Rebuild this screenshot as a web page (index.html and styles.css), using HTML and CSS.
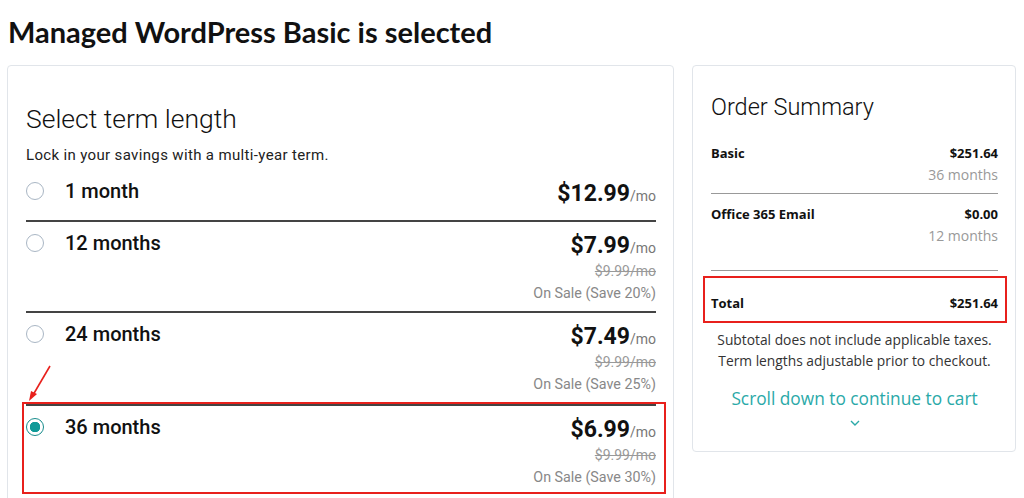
FILE: index.html
```html
<!DOCTYPE html>
<html>

<head>
    <title>Managed WordPress Basic</title>
    <link rel="stylesheet" href="styles.css">
</head>

<body>
    <h1 class="pageTitle">Managed WordPress Basic is selected</h1>

    <div class="layout">
        <div class="card termCard">
            <h2 class="cardTitle">Select term length</h2>
            <p class="termHint">Lock in your savings with a multi-year term.</p>

            <div class="term termSingle">
                <div class="termLabel"><span class="radio"></span>1 month</div>
                <div class="termPrice">
                    <div class="priceNow">$12.99<span class="perMonth">/mo</span></div>
                </div>
            </div>

            <div class="term">
                <div class="termLabel"><span class="radio"></span>12 months</div>
                <div class="termPrice">
                    <div class="priceNow">$7.99<span class="perMonth">/mo</span></div>
                    <div class="priceOld">$9.99/mo</div>
                    <div class="priceSale">On Sale (Save 20%)</div>
                </div>
            </div>

            <div class="term">
                <div class="termLabel"><span class="radio"></span>24 months</div>
                <div class="termPrice">
                    <div class="priceNow">$7.49<span class="perMonth">/mo</span></div>
                    <div class="priceOld">$9.99/mo</div>
                    <div class="priceSale">On Sale (Save 25%)</div>
                </div>
            </div>

            <div class="highlight termHighlight">
                <!-- seta vermelha apontando para a opção escolhida -->
                <svg class="arrow" width="30" height="40" viewBox="0 0 30 40">
                    <line x1="26" y1="2" x2="9" y2="31" stroke="#e8201c" stroke-width="1.6" />
                    <polygon points="5,37 7,27 13,30" fill="#e8201c" />
                </svg>
                <div class="term">
                    <div class="termLabel"><span class="radio checked"></span>36 months</div>
                    <div class="termPrice">
                        <div class="priceNow">$6.99<span class="perMonth">/mo</span></div>
                        <div class="priceOld">$9.99/mo</div>
                        <div class="priceSale">On Sale (Save 30%)</div>
                    </div>
                </div>
            </div>
        </div>

        <div class="card summaryCard">
            <h2 class="cardTitle summaryTitle">Order Summary</h2>

            <div class="summaryRow">
                <div class="summaryLine">
                    <span>Basic</span>
                    <span>$251.64</span>
                </div>
                <div class="summaryTerm">36 months</div>
            </div>

            <div class="summaryRow summaryRowLast">
                <div class="summaryLine">
                    <span>Office 365 Email</span>
                    <span>$0.00</span>
                </div>
                <div class="summaryTerm">12 months</div>
            </div>

            <div class="highlight totalHighlight">
                <div class="summaryLine">
                    <span>Total</span>
                    <span>$251.64</span>
                </div>
            </div>

            <p class="summaryNote">Subtotal does not include applicable taxes.<br>Term lengths adjustable prior to checkout.</p>

            <a class="scrollLink" href="#">Scroll down to continue to cart</a>
            <div class="chevron">
                <svg width="12" height="8" viewBox="0 0 12 8">
                    <polyline points="2,2 6,6 10,2" fill="none" stroke="#2aa9a8" stroke-width="1.4" />
                </svg>
            </div>
        </div>
    </div>
</body>

</html>
```

FILE: styles.css
```css
body {
    margin: 0;
    padding: 0;
    background-color: #fff;
    color: #111;
    font-family: Roboto, Arial, sans-serif;
    overflow: hidden;
}

.pageTitle {
    font-family: Lato, Arial, sans-serif;
    font-size: 29px;
    font-weight: 700;
    line-height: 34px;
    margin: 15px 0 0 8px;
    color: #111;
}

.layout {
    display: flex;
    align-items: flex-start;
    gap: 18px;
    margin: 16px 0 0 7px;
}

.card {
    border: 1px solid #e1e5ea;
    border-radius: 4px;
    background-color: #fff;
}

.termCard {
    width: 630px;
    padding: 38px 17px 20px 18px;
}

.summaryCard {
    width: 287px;
    padding: 26px 17px 24px 18px;
    font-family: "Open Sans", Arial, sans-serif;
}

.cardTitle {
    font-family: Roboto, Arial, sans-serif;
    font-weight: 300;
    font-size: 26.5px;
    line-height: 30px;
    margin: 0;
    color: #111;
}

.termHint {
    font-size: 15px;
    letter-spacing: 0.35px;
    margin: 11px 0 0;
    line-height: 20px;
    color: #222;
}

/* linhas de prazo */
.term {
    display: flex;
    justify-content: space-between;
    align-items: flex-start;
    padding: 10px 0 7px;
    border-top: 2px solid #444;
}

.termSingle {
    border-top: none;
    padding: 15px 0 12px;
}

.termLabel {
    display: flex;
    align-items: center;
    height: 22px;
    font-size: 20px;
    font-weight: 500;
    color: #111;
}

.radio {
    width: 18px;
    height: 18px;
    border: 1.5px solid #a9b6c4;
    border-radius: 50%;
    margin-right: 21px;
    box-sizing: border-box;
}

.radio.checked {
    border-color: #178c8c;
    background: radial-gradient(circle, #0f9a98 0 5px, #fff 5.5px);
}

.termPrice {
    text-align: right;
}

.priceNow {
    font-size: 23px;
    font-weight: 700;
    line-height: 28px;
    height: 28px;
    color: #111;
}

.perMonth {
    font-size: 14px;
    font-weight: 400;
    line-height: 1;
    color: #777;
}

.priceOld {
    font-size: 14px;
    line-height: 22px;
    color: #999;
    text-decoration: line-through;
}

.priceSale {
    font-size: 14.3px;
    line-height: 22px;
    color: #888;
}

/* caixas vermelhas de destaque */
.highlight {
    border: 2px solid #e8201c;
    position: relative;
}

.termHighlight {
    margin: 0 -10px 0 -4px;
    padding: 0 8px 0 2px;
}

.termHighlight .term {
    padding-bottom: 4px;
}

.arrow {
    position: absolute;
    left: 0;
    top: -40px;
}

/* resumo do pedido */
.summaryTitle {
    font-size: 23.5px;
    margin-bottom: 21px;
}

.summaryRow {
    border-bottom: 1px solid #999;
    padding-bottom: 8px;
    margin-bottom: 10px;
}

.summaryRowLast {
    padding-bottom: 24px;
    margin-bottom: 5px;
}

.summaryLine {
    display: flex;
    justify-content: space-between;
    font-size: 13px;
    font-weight: 700;
    line-height: 21px;
    color: #111;
}

.summaryTerm {
    text-align: right;
    font-size: 14px;
    line-height: 21px;
    color: #999;
}

.totalHighlight {
    margin: 0 -9px 0 -8px;
    padding: 15px 7px 7px 6px;
}

.summaryNote {
    text-align: center;
    font-size: 13.8px;
    line-height: 21px;
    margin: 6px 0 0;
    color: #333;
}

.scrollLink {
    display: block;
    text-align: center;
    margin-top: 16px;
    font-size: 17.3px;
    line-height: 24px;
    color: #2aa9a8;
    text-decoration: none;
}

.chevron {
    text-align: center;
    line-height: 0;
    margin-top: 8px;
}
```
